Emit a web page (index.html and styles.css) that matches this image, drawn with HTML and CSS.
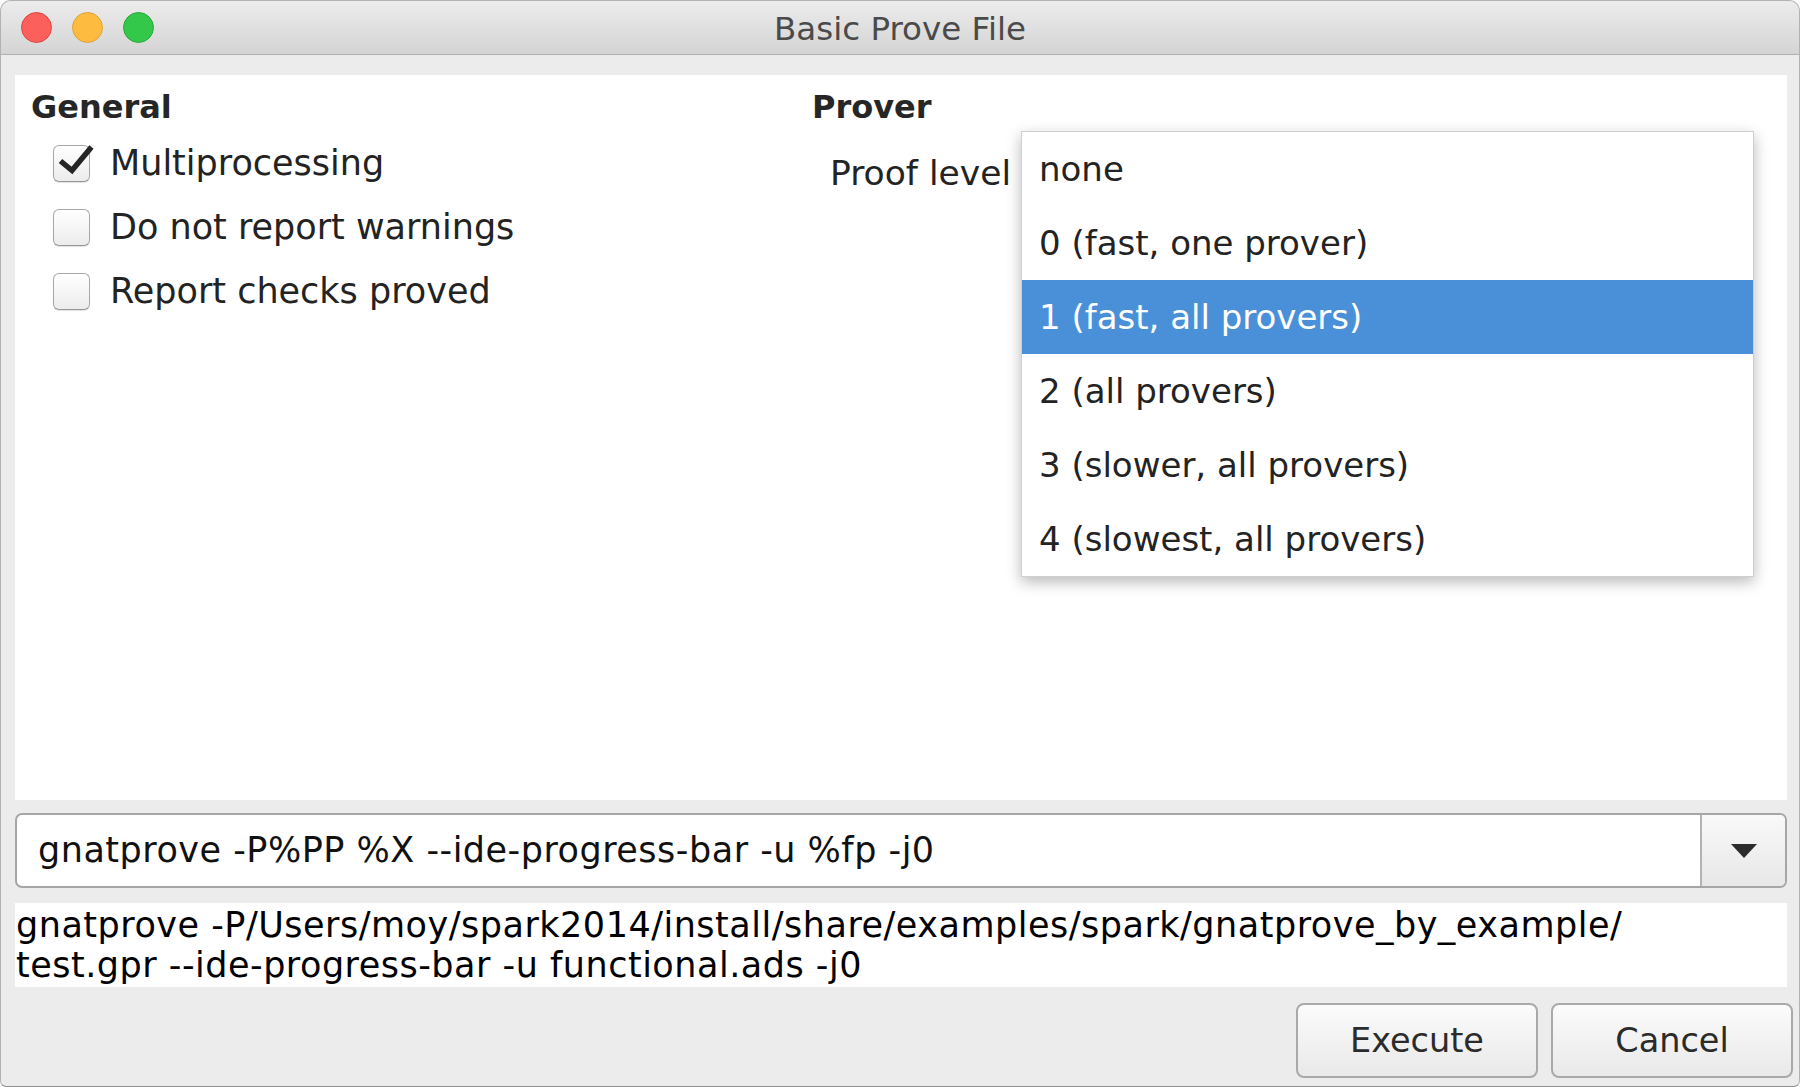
FILE: index.html
```html
<!DOCTYPE html>
<html lang="en">
<head>
    <meta charset="UTF-8">
    <title>Basic Prove File</title>
    <link rel="stylesheet" href="styles.css">
</head>
<body>

    <div class="window">
        <div class="titlebar">
            <div class="lights">
                <span class="light close"></span>
                <span class="light min"></span>
                <span class="light max"></span>
            </div>
            <div class="title">Basic Prove File</div>
            <div></div>
        </div>

        <div class="content">
            <div class="panel">
                <div class="section">
                    <h3>General</h3>
                    <div class="check">
                        <span class="box">
                            <svg width="37" height="37" viewBox="0 0 37 37"><polyline points="7.5,17 19,26.5 38.5,3" fill="none" stroke="#252525" stroke-width="5.5" stroke-linejoin="miter"/></svg>
                        </span>
                        Multiprocessing
                    </div>
                    <div class="check"><span class="box"></span>Do not report warnings</div>
                    <div class="check"><span class="box"></span>Report checks proved</div>
                </div>
                <div class="section">
                    <h3>Prover</h3>
                    <div class="field">Proof level</div>
                </div>

                <ul class="popup">
                    <li>none</li>
                    <li>0 (fast, one prover)</li>
                    <li class="selected">1 (fast, all provers)</li>
                    <li>2 (all provers)</li>
                    <li>3 (slower, all provers)</li>
                    <li>4 (slowest, all provers)</li>
                </ul>
            </div>

            <div class="combo">
                <div class="combo-text">gnatprove -P%PP %X --ide-progress-bar -u %fp -j0</div>
                <div class="combo-arrow">
                    <svg width="26" height="14" viewBox="0 0 26 14"><polygon points="0,0 26,0 13,14" fill="#2b2b2b"/></svg>
                </div>
            </div>

            <div class="output">gnatprove -P/Users/moy/spark2014/install/share/examples/spark/gnatprove_by_example/<br>test.gpr --ide-progress-bar -u functional.ads -j0</div>

            <div class="buttons">
                <button>Execute</button>
                <button>Cancel</button>
            </div>
        </div>
    </div>

</body>
</html>
```

FILE: styles.css
```css
body {
    margin: 0;
    background: #fff;
    font-family: 'DejaVu Sans', sans-serif;
    font-size: 34px;
    color: #232323;
}
.window {
    width: 1800px;
    height: 1087px;
    box-sizing: border-box;
    border: 1px solid #b2b2b2;
    border-bottom-color: #8e8e8e;
    border-radius: 11px 11px 6px 6px;
    background: #ececec;
    overflow: hidden;
    display: flex;
    flex-direction: column;
}
.titlebar {
    height: 53px;
    flex-shrink: 0;
    border-bottom: 1px solid #b1b1b1;
    background: linear-gradient(#ececec, #d4d4d4);
    display: grid;
    grid-template-columns: 1fr auto 1fr;
    align-items: center;
}
.lights {
    display: flex;
    gap: 20px;
    padding-left: 20px;
}
.light {
    width: 29px;
    height: 29px;
    border-radius: 50%;
    border: 1px solid;
}
.close { background: #fc605c; border-color: #e0443f; }
.min   { background: #fdbc40; border-color: #dea236; }
.max   { background: #34c84a; border-color: #27aa35; }
.title {
    font-size: 32.5px;
    color: #4a4a4a;
    padding-top: 3px;
}
.content {
    flex: 1;
    padding: 20px 12px 0 14px;
    display: flex;
    flex-direction: column;
}
.panel {
    position: relative;
    height: 725px;
    flex-shrink: 0;
    background: #fff;
    box-sizing: border-box;
    padding: 12px 0 0 16px;
    display: grid;
    grid-template-columns: 781px 1fr;
    align-items: start;
}
.section h3 {
    margin: 0;
    font-size: 32px;
    line-height: 40px;
    font-weight: bold;
    color: #262626;
}
.check {
    height: 64px;
    display: flex;
    align-items: center;
    padding-left: 22px;
    font-size: 35px;
    line-height: 40px;
}
.check:first-of-type { margin-top: 4px; }
.box {
    width: 37px;
    height: 37px;
    box-sizing: border-box;
    margin-right: 20px;
    border: 1.5px solid #a9a9a9;
    border-bottom-color: #979797;
    border-radius: 6px;
    background: linear-gradient(#ffffff, #ececec);
    box-shadow: 0 1px 1px rgba(0,0,0,0.12);
    position: relative;
}
.box svg {
    position: absolute;
    left: -1.5px;
    top: -1.5px;
    overflow: visible;
}
.field {
    margin-top: 26px;
    padding-left: 18px;
    font-size: 34.5px;
    line-height: 40px;
}
.popup {
    position: absolute;
    left: 1006px;
    top: 56px;
    width: 733px;
    margin: 0;
    padding: 0;
    list-style: none;
    box-sizing: border-box;
    border: 1px solid #cfcfcf;
    background: #fff;
    box-shadow: 0 5px 14px rgba(0,0,0,0.28);
}
.popup li {
    height: 74px;
    line-height: 74px;
    padding-left: 17px;
}
.popup li.selected {
    background: #4a90d9;
    color: #fff;
}
.combo {
    margin-top: 13px;
    height: 75px;
    flex-shrink: 0;
    box-sizing: border-box;
    border: 2px solid #a6a6a6;
    border-radius: 7px;
    background: #fff;
    display: flex;
    overflow: hidden;
}
.combo-text {
    flex: 1;
    padding-left: 21px;
    font-size: 35px;
    letter-spacing: 0.5px;
    line-height: 71px;
    color: #111;
}
.combo-arrow {
    width: 83px;
    border-left: 2px solid #b3b3b3;
    background: linear-gradient(#f9f9f9, #e7e7e7);
    display: flex;
    align-items: center;
    justify-content: center;
}
.output {
    margin-top: 15px;
    height: 84px;
    flex-shrink: 0;
    box-sizing: border-box;
    padding: 2px 1px;
    background: #fff;
    font-size: 35px;
    letter-spacing: 0.5px;
    line-height: 40px;
    color: #000;
}
.buttons {
    margin-top: 16px;
    margin-right: -6px;
    display: flex;
    justify-content: flex-end;
    gap: 13px;
}
button {
    width: 242px;
    height: 75px;
    box-sizing: border-box;
    border: 2px solid #a9a9a9;
    border-radius: 8px;
    background: linear-gradient(#fbfbfb, #e9e9e9);
    font-family: 'DejaVu Sans', sans-serif;
    font-size: 33.5px;
    color: #2b2b2b;
    padding: 0;
}
```
